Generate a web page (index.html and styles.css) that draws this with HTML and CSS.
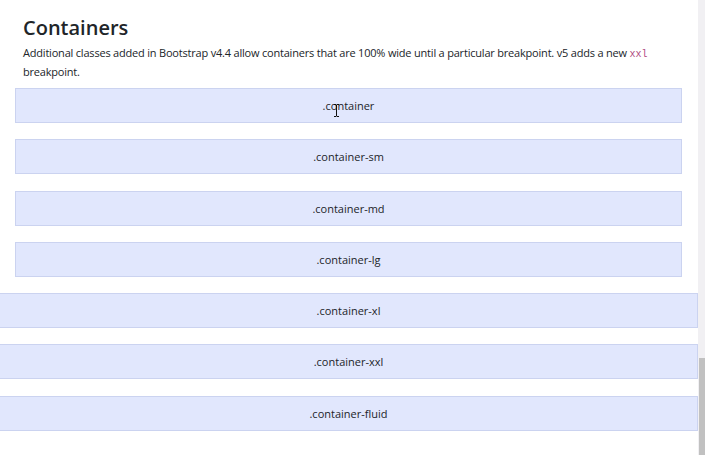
FILE: index.html
```html
<!DOCTYPE html>
<html lang="en">
<head>
<meta charset="utf-8">
<title>Containers</title>
<link rel="stylesheet" href="styles.css">
</head>
<body>
<main class="page">
  <section class="intro">
    <h2 class="title">Containers</h2>
    <p class="lead">Additional classes added in Bootstrap v4.4 allow containers that are 100% wide until a particular breakpoint. v5 adds a new <code class="code">xxl</code> breakpoint.</p>
  </section>
  <div class="boxes boxes-inset">
    <div class="box">.container</div>
    <div class="box">.container-sm</div>
    <div class="box">.container-md</div>
    <div class="box">.container-lg</div>
  </div>
  <div class="boxes boxes-full">
    <div class="box">.container-xl</div>
    <div class="box">.container-xxl</div>
    <div class="box">.container-fluid</div>
  </div>
</main>
<svg class="cursor" width="7" height="13" viewBox="0 0 7 13" aria-hidden="true">
  <path d="M1 0.5h2l0.5 0.5 0.5-0.5h2M3.5 1v11M1 12.5h2l0.5-0.5 0.5 0.5h2" fill="none" stroke="#111" stroke-width="1"/>
</svg>
<div class="scrollbar"><div class="thumb"></div></div>
</body>
</html>
```

FILE: styles.css
```css
html, body {
  margin: 0;
  padding: 0;
  background: #fff;
}
body {
  font-family: "Open Sans", "Noto Sans", sans-serif;
  color: #212529;
  width: 698px;
}
.page {
  display: flex;
  flex-direction: column;
  padding-top: 14px;
}
.intro {
  padding: 0 20px 0 23px;
}
.title {
  margin: 0;
  font-size: 20px;
  font-weight: 600;
  line-height: 28px;
  letter-spacing: 0;
}
.lead {
  margin: 2px 0 0;
  font-size: 11px;
  line-height: 17px;
  letter-spacing: -0.2px;
}
.code {
  font-family: "Liberation Mono", monospace;
  font-size: 10px;
  letter-spacing: 0;
  color: #b04a82;
}
.boxes {
  display: flex;
  flex-direction: column;
  gap: 16.3px;
}
.boxes-inset {
  margin: 8px 16px 0 15px;
}
.boxes-full {
  margin-top: 16.3px;
}
.box {
  box-sizing: border-box;
  height: 35px;
  display: flex;
  align-items: center;
  justify-content: center;
  background: #e1e7fd;
  border: 1px solid #cbd3f0;
  font-size: 11px;
}
.boxes-full .box {
  border-left: 0;
}
.cursor {
  position: absolute;
  left: 333px;
  top: 104px;
}
.scrollbar {
  position: fixed;
  top: 0;
  right: 0;
  width: 7px;
  height: 455px;
  background: #f1f0f3;
}
.thumb {
  position: absolute;
  top: 358px;
  left: 1px;
  right: 0;
  bottom: 0;
  background: #c1c1c1;
}
```
